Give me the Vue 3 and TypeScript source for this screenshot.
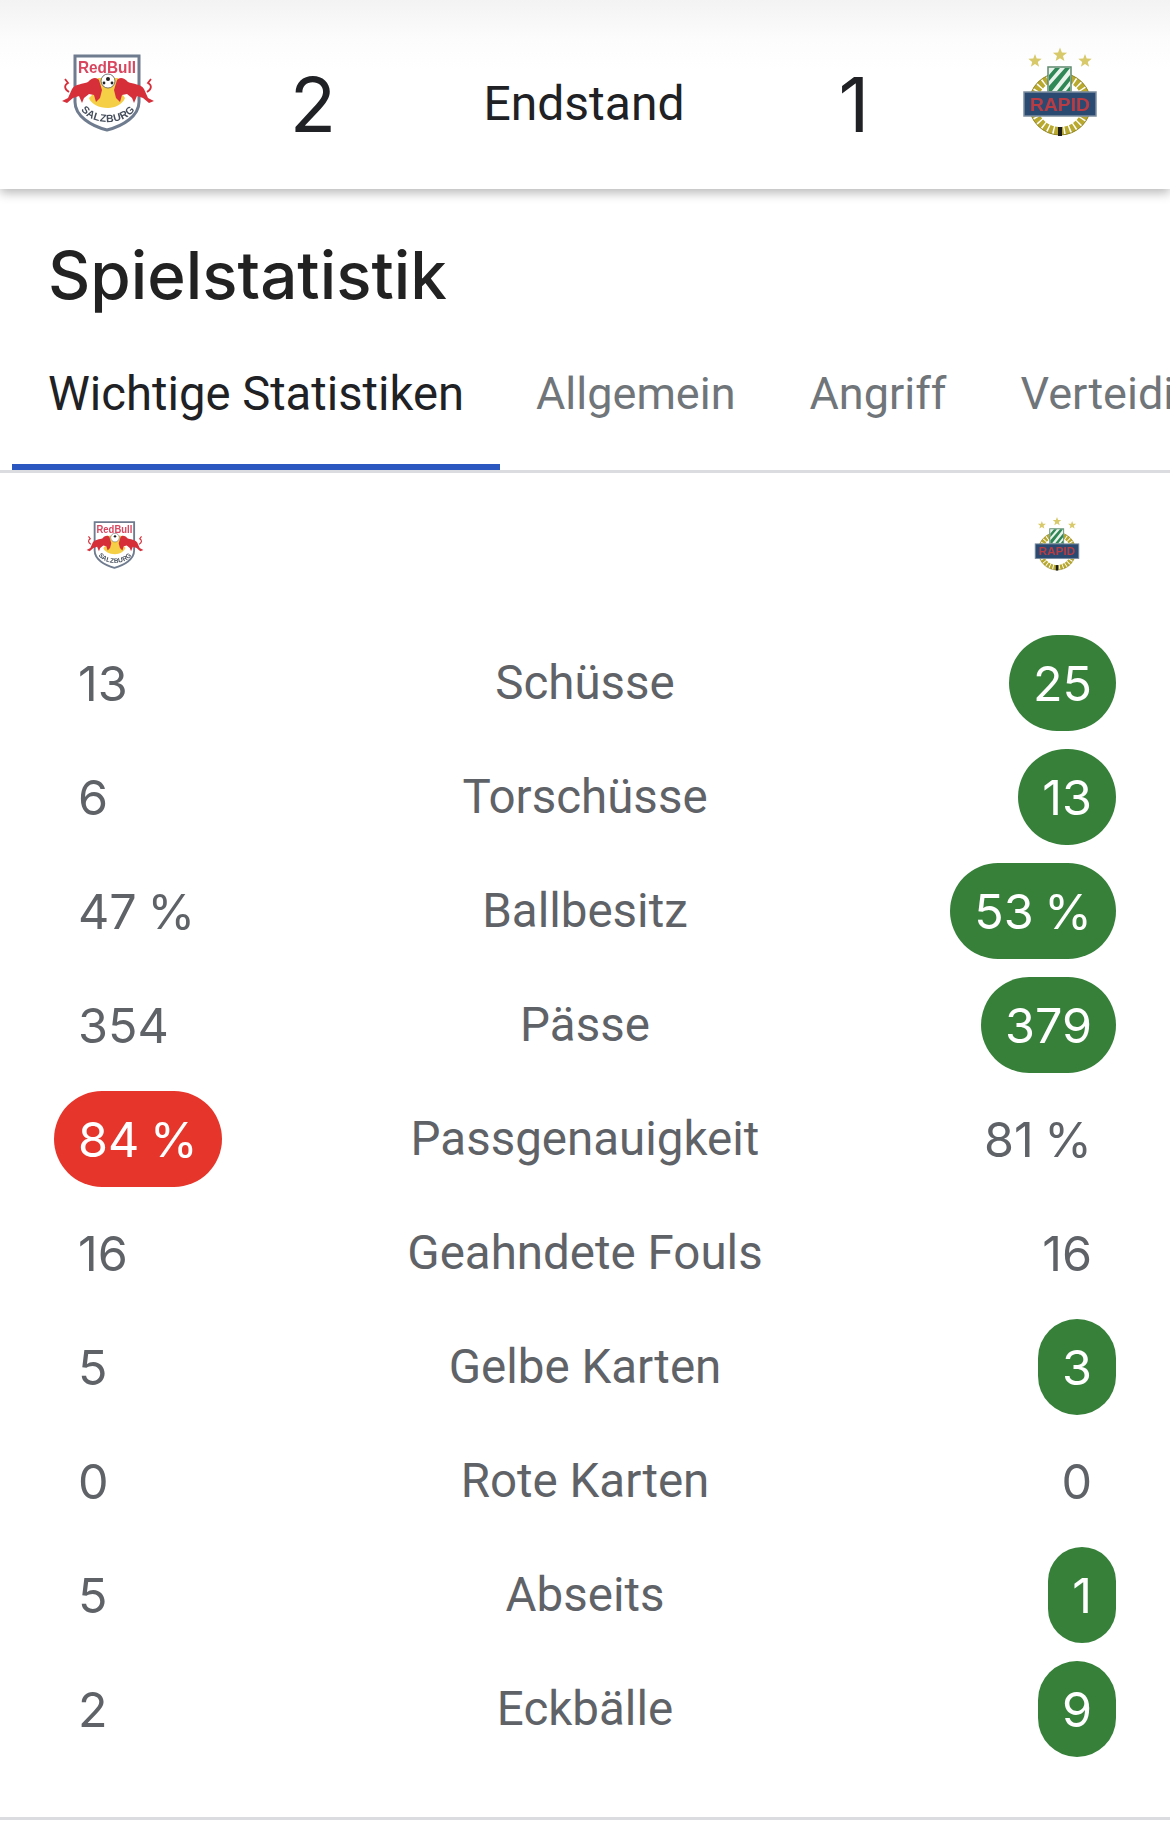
<script setup lang="ts">
interface Row { left: string; label: string; right: string; win?: 'left' | 'right' }
const rows: Row[] = [
  { left: '13', label: 'Schüsse', right: '25', win: 'right' },
  { left: '6', label: 'Torschüsse', right: '13', win: 'right' },
  { left: '47 %', label: 'Ballbesitz', right: '53 %', win: 'right' },
  { left: '354', label: 'Pässe', right: '379', win: 'right' },
  { left: '84 %', label: 'Passgenauigkeit', right: '81 %', win: 'left' },
  { left: '16', label: 'Geahndete Fouls', right: '16' },
  { left: '5', label: 'Gelbe Karten', right: '3', win: 'right' },
  { left: '0', label: 'Rote Karten', right: '0' },
  { left: '5', label: 'Abseits', right: '1', win: 'right' },
  { left: '2', label: 'Eckbälle', right: '9', win: 'right' },
]
const tabs = ['Wichtige Statistiken', 'Allgemein', 'Angriff', 'Verteidigung']
const bull = 'M1 47L7 44L11 35C14 30 22 30 27 28C31 23 36 23 38 26L41 36L39 44L35 48L33 41L28 40L23 44L21 49L18 42L12 44L6 49Z'
const star = (cx: number, cy: number, r: number): string => {
  const pts: string[] = []
  for (let i = 0; i < 10; i++) {
    const a = -Math.PI / 2 + (i * Math.PI) / 5
    const d = i % 2 === 0 ? r : r * 0.42
    pts.push(`${(cx + d * Math.cos(a)).toFixed(1)},${(cy + d * Math.sin(a)).toFixed(1)}`)
  }
  return pts.join(' ')
}
const stars = [star(13, 14, 7), star(38, 8, 7.5), star(63, 14, 7)]
</script>

<template>
  <div class="page">
    <header class="score">
      <div class="cell">
        <svg class="logo lg-rb" viewBox="0 0 94 78">
          <path d="M14 2H78V48C78 62 62 72 46 76C30 72 14 62 14 48Z" fill="#fff" stroke="#6f7b8e" stroke-width="3"/>
          <text x="46" y="19" text-anchor="middle" font-family="Liberation Sans" font-weight="700" font-size="16.500" textLength="58" lengthAdjust="spacingAndGlyphs" fill="#d8465f">RedBull</text>
          <path d="M37 24H57L58 36L64 44C62 50 54 54 47 54C38 54 30 50 28 44L36 36Z" fill="#f5cf45"/>
          <circle cx="47" cy="27" r="7" fill="#fff" stroke="#555" stroke-width="0.8"/>
          <circle cx="47" cy="25" r="2" fill="#222"/>
          <circle cx="43" cy="29" r="1.4" fill="#222"/>
          <circle cx="51" cy="29" r="1.4" fill="#222"/>
          <path :d="bull" fill="#d62f3a"/>
          <path :d="bull" fill="#d62f3a" transform="translate(94 0) scale(-1 1)"/>
          <path d="M8 38C3 35 3 31 7 29L4 25" fill="none" stroke="#d62f3a" stroke-width="1.8"/>
          <path d="M86 38C91 35 91 31 87 29L90 25" fill="none" stroke="#d62f3a" stroke-width="1.8"/>
          <path id="rbarc-a" d="M17 50C25 74 69 74 77 50" fill="none"/>
          <text font-family="Liberation Sans" font-weight="700" font-size="10.500" fill="#454e5c" letter-spacing="0.4"><textPath href="#rbarc-a" startOffset="50%" text-anchor="middle">SALZBURG</textPath></text>
        </svg>
      </div>
      <div class="cell num">2</div>
      <div class="cell status">Endstand</div>
      <div class="cell num">1</div>
      <div class="cell">
        <svg class="logo lg-rapid" viewBox="0 0 76 92">
          <polygon v-for="s in stars" :key="s" :points="s" fill="#d8c96a"/>
          <circle cx="38" cy="57" r="27" fill="none" stroke="#b9a92f" stroke-width="8" stroke-dasharray="4 1.500"/>
          <circle cx="38" cy="57" r="31" fill="none" stroke="#8f8420" stroke-width="1"/>
          <rect x="26" y="20" width="23" height="25" fill="#e9f3ec" stroke="#5d8b6d" stroke-width="1.5"/>
          <path d="M27 28L33 21H38L27 34ZM27 39L43 21H48L30 44H27ZM35 44L48 28V34L40 44ZM44 44L48 39V44Z" fill="#2f8756"/>
          <rect x="2" y="45" width="72" height="24" fill="#2a4a72" stroke="#7c8da0" stroke-width="1.5"/>
          <text x="38" y="63.500" text-anchor="middle" font-family="Liberation Sans" font-weight="700" font-size="18" textLength="60" lengthAdjust="spacingAndGlyphs" fill="#b93c44">RAPID</text>
          <rect x="36" y="80" width="4" height="9" fill="#1c1c1c"/>
        </svg>
      </div>
    </header>

    <h1 class="title">Spielstatistik</h1>

    <nav class="tabs">
      <div v-for="(t, i) in tabs" :key="t" class="tab" :class="{ active: i === 0 }">{{ t }}</div>
    </nav>

    <div class="teams">
      <svg class="logo sm-rb" viewBox="0 0 94 78">
        <path d="M14 2H78V48C78 62 62 72 46 76C30 72 14 62 14 48Z" fill="#fff" stroke="#6f7b8e" stroke-width="3"/>
        <text x="46" y="19" text-anchor="middle" font-family="Liberation Sans" font-weight="700" font-size="16.500" textLength="58" lengthAdjust="spacingAndGlyphs" fill="#d8465f">RedBull</text>
        <path d="M37 24H57L58 36L64 44C62 50 54 54 47 54C38 54 30 50 28 44L36 36Z" fill="#f5cf45"/>
        <circle cx="47" cy="27" r="7" fill="#fff" stroke="#555" stroke-width="0.8"/>
        <circle cx="47" cy="25" r="2" fill="#222"/>
        <path :d="bull" fill="#d62f3a"/>
        <path :d="bull" fill="#d62f3a" transform="translate(94 0) scale(-1 1)"/>
        <path d="M8 38C3 35 3 31 7 29L4 25" fill="none" stroke="#d62f3a" stroke-width="1.8"/>
        <path d="M86 38C91 35 91 31 87 29L90 25" fill="none" stroke="#d62f3a" stroke-width="1.8"/>
        <path id="rbarc-b" d="M17 50C25 74 69 74 77 50" fill="none"/>
        <text font-family="Liberation Sans" font-weight="700" font-size="10.500" fill="#454e5c" letter-spacing="0.4"><textPath href="#rbarc-b" startOffset="50%" text-anchor="middle">SALZBURG</textPath></text>
      </svg>
      <svg class="logo sm-rapid" viewBox="0 0 76 92">
        <polygon v-for="s in stars" :key="s" :points="s" fill="#d8c96a"/>
        <circle cx="38" cy="57" r="27" fill="none" stroke="#b9a92f" stroke-width="8" stroke-dasharray="4 1.500"/>
        <circle cx="38" cy="57" r="31" fill="none" stroke="#8f8420" stroke-width="1"/>
        <rect x="26" y="20" width="23" height="25" fill="#e9f3ec" stroke="#5d8b6d" stroke-width="1.5"/>
        <path d="M27 28L33 21H38L27 34ZM27 39L43 21H48L30 44H27ZM35 44L48 28V34L40 44ZM44 44L48 39V44Z" fill="#2f8756"/>
        <rect x="2" y="45" width="72" height="24" fill="#2a4a72" stroke="#7c8da0" stroke-width="1.5"/>
        <text x="38" y="63.500" text-anchor="middle" font-family="Liberation Sans" font-weight="700" font-size="18" textLength="60" lengthAdjust="spacingAndGlyphs" fill="#b93c44">RAPID</text>
        <rect x="36" y="80" width="4" height="9" fill="#1c1c1c"/>
      </svg>
    </div>

    <section class="rows">
      <div v-for="r in rows" :key="r.label" class="row">
        <div class="side">
          <span class="val" :class="{ lose: r.win === 'left' }">{{ r.left }}</span>
        </div>
        <div class="label">{{ r.label }}</div>
        <div class="side end">
          <span class="val" :class="{ won: r.win === 'right' }">{{ r.right }}</span>
        </div>
      </div>
    </section>
    <div class="rule"></div>
  </div>
</template>

<style>
html, body { background: #fff; }
</style>

<style scoped>
.page {
  width: 1170px;
  height: 1832px;
  overflow: hidden;
  background: #fff;
  font-family: Roboto, "Noto Sans", sans-serif;
  color: #202124;
}
.score {
  height: 189px;
  display: grid;
  grid-template-columns: 216px 194px 348px 192px 220px;
  align-items: center;
  background: linear-gradient(#f3f3f3 0, #fcfcfc 40px, #fff 70px);
  box-shadow: 0 4px 10px rgba(0, 0, 0, 0.28);
  position: relative;
}
.cell { display: flex; justify-content: center; align-items: center; }
.num { font-family: Inter, Roboto, sans-serif; font-size: 76px; line-height: 1; padding-top: 18px; }
.status { font-size: 48px; padding-top: 18px; }
.logo { display: block; filter: blur(0.7px); }
.lg-rb { width: 94px; height: 78px; margin-bottom: 3px; }
.lg-rapid { width: 76px; height: 92px; margin-bottom: 4px; }
.title {
  margin: 0;
  padding: 50px 0 0 48px;
  font-family: Inter, Roboto, sans-serif;
  font-size: 65.500px;
  line-height: 74px;
  font-weight: 500;
  color: #222;
}
.tabs {
  display: flex;
  margin-top: 42px;
  height: 115px;
  padding-left: 12px;
  border-bottom: 3px solid #dadce0;
  white-space: nowrap;
}
.tab {
  font-size: 45px;
  line-height: 78px;
  padding: 0 38px 0 36px;
  color: #70757a;
  height: 115px;
  box-sizing: border-box;
}
.tab.active {
  font-size: 47.200px;
  padding: 0 36px;
  color: #202124;
  border-bottom: 6px solid #2b57c0;
}
.teams {
  height: 153px;
  box-sizing: border-box;
  display: flex;
  justify-content: space-between;
  align-items: center;
  padding: 0 90px 10px 86px;
}
.sm-rb { width: 58px; height: 50px; }
.sm-rapid { width: 46px; height: 57px; }
.row {
  height: 114px;
  display: grid;
  grid-template-columns: 1fr 500px 1fr;
  align-items: center;
  padding: 0 54px;
  font-size: 47.500px;
  color: #5f6368;
}
.label { text-align: center; }
.side { display: flex; }
.side.end { justify-content: flex-end; }
.val {
  height: 96px;
  line-height: 98px;
  padding: 0 24px;
  border-radius: 48px;
  white-space: nowrap;
  font-family: Inter, Roboto, sans-serif;
  font-size: 48.500px;
  word-spacing: -3px;
}
.val.won { background: #36803a; color: #fff; }
.val.lose { background: #e6352a; color: #fff; }
.rule {
  height: 3px;
  background: #dadce0;
  margin-top: 51px;
}
</style>
